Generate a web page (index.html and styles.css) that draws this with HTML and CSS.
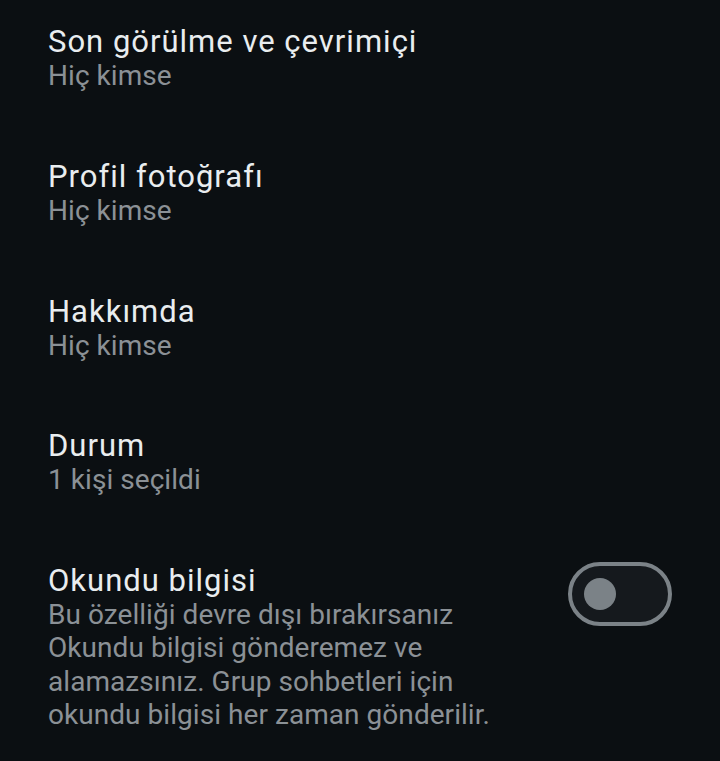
FILE: index.html
```html
<!DOCTYPE html>
<html lang="tr">
<head>
<meta charset="utf-8">
<link rel="stylesheet" href="styles.css">
</head>
<body>
<div class="list">
  <div class="item">
    <div class="title">Son görülme ve çevrimiçi</div>
    <div class="sub">Hiç kimse</div>
  </div>
  <div class="item">
    <div class="title">Profil fotoğrafı</div>
    <div class="sub">Hiç kimse</div>
  </div>
  <div class="item">
    <div class="title">Hakkımda</div>
    <div class="sub">Hiç kimse</div>
  </div>
  <div class="item">
    <div class="title">Durum</div>
    <div class="sub">1 kişi seçildi</div>
  </div>
  <div class="item toggle-item">
    <div class="text">
      <div class="title">Okundu bilgisi</div>
      <div class="sub desc">Bu özelliği devre dışı bırakırsanız Okundu bilgisi gönderemez ve alamazsınız. Grup sohbetleri için okundu bilgisi her zaman gönderilir.</div>
    </div>
    <div class="switch"><div class="knob"></div></div>
  </div>
</div>
</body>
</html>
```

FILE: styles.css
```css
html, body {
  margin: 0;
  padding: 0;
  background: #0b0f12;
  height: 100%;
}
body {
  font-family: Roboto, "Noto Sans", sans-serif;
  overflow: hidden;
}
.list {
  display: flex;
  flex-direction: column;
  padding: 25.4px 48px 0 48px;
  gap: 67.4px;
}
.item {
  display: flex;
  flex-direction: column;
}
.title {
  color: #e9edef;
  font-size: 31px;
  line-height: 34px;
  letter-spacing: 1px;
}
.sub {
  color: #8b9196;
  font-size: 28px;
  line-height: 33.3px;
  letter-spacing: 0.05px;
}
.toggle-item {
  flex-direction: row;
  align-items: flex-start;
  justify-content: space-between;
}
.desc {
  width: 470px;
}
.switch {
  box-sizing: border-box;
  width: 104px;
  height: 64px;
  margin-top: -2px;
  border: 4px solid #7b8287;
  border-radius: 32px;
  background: #15191d;
  display: flex;
  align-items: center;
  padding-left: 12px;
}
.knob {
  width: 32px;
  height: 32px;
  border-radius: 50%;
  background: #7b8287;
}
```
